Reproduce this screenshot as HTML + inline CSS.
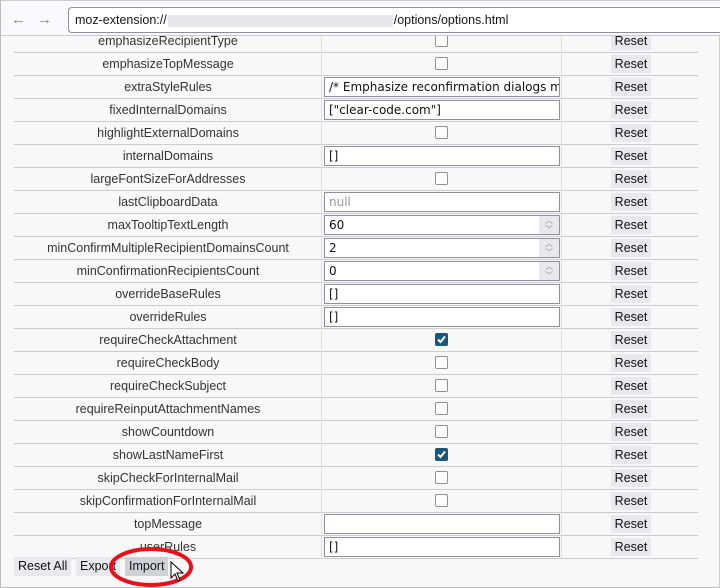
<!DOCTYPE html>
<html><head><style>
*{box-sizing:border-box;margin:0;padding:0}
body{width:720px;height:588px;overflow:hidden;background:#f8f8f8;font-family:"Liberation Sans",sans-serif;font-size:12px;color:#333;position:relative;border-left:1px solid #bbb;border-right:1px solid #ccc;border-bottom:1px solid #bbb}
.bar{position:absolute;left:0;top:0;width:720px;height:36px;background:#f9f9fb;border-top:1px solid #ccc;border-bottom:1px solid #ccc;z-index:5}
.url{position:absolute;left:67px;top:6px;width:653px;height:26px;border:1px solid #8f8f9d;border-right:none;border-radius:4px 0 0 4px;background:#fff;font-size:12.5px;line-height:24px;padding-left:6px;color:#15141a}
.blur{display:inline-block;width:225px;height:12px;background:#e8e8ea;vertical-align:middle;margin:0 1px}
.nav{position:absolute;top:10px;color:#888;font-size:15px}
.row{position:absolute;left:13px;width:684px;height:23px;border-bottom:1px solid #ccc}
.lab{position:absolute;left:0;width:308px;text-align:center;line-height:22px;font-size:12.5px}
.c2{position:absolute;left:307px;width:241px;height:23px;border-left:1px solid #e0e0e0;border-right:1px solid #e0e0e0}
.inp{position:absolute;left:2px;top:1px;width:236px;height:20px;border:1px solid #8f8f9d;background:#fff;line-height:18px;padding-left:4px;white-space:nowrap;overflow:hidden;color:#111;font-family:"DejaVu Sans",sans-serif;font-size:12px}
.sp{position:absolute;right:0;top:0;width:20px;height:18px;background:#e9e9ed;color:#888;font-size:8px;line-height:9px;text-align:center}
.cb{position:absolute;left:113px;top:4px;width:13px;height:13px;border:1px solid #8f8f9d;border-radius:2px;background:#fff}
.cb.on{background:#1a5677;border-color:#1a5677}
.rs{position:absolute;left:597px;top:2px;width:40px;height:18px;background:#e9e9ed;text-align:center;line-height:18px;font-size:12.5px;color:#111}
.b{position:absolute;top:557px;height:19px;background:#e9e9ed;line-height:19px;font-size:12.5px;color:#111;padding:0 4px}
</style></head><body>
<div class="bar"><span class="nav" style="left:10px">←</span><span class="nav" style="left:36px">→</span>
<div class="url">moz-extension://<span class="blur"></span>/options/options.html</div></div>
<div id="t"></div>
<div class="b" style="left:13px">Reset All</div>
<div class="b" style="left:75px">Export</div>
<div class="b" style="left:124px;background:#d0d0d7">Import</div>
<svg style="position:absolute;left:0;top:0" width="720" height="588"><ellipse cx="150" cy="567" rx="40" ry="18" fill="none" stroke="#e8101a" stroke-width="4"/>
<path d="M170 562 L170 578 L174 574 L177 581 L179 580 L176 573 L182 573 Z" fill="#fff" stroke="#000" stroke-width="1"/></svg>
<script>
var R=[["emphasizeRecipientType","c"],["emphasizeTopMessage","c"],["extraStyleRules","t","/* Emphasize reconfirmation dialogs more"],["fixedInternalDomains","t",'["clear-code.com"]'],["highlightExternalDomains","c"],["internalDomains","t","[]"],["largeFontSizeForAddresses","c"],["lastClipboardData","t","<span style=color:#999>null</span>"],["maxTooltipTextLength","n","60"],["minConfirmMultipleRecipientDomainsCount","n","2"],["minConfirmationRecipientsCount","n","0"],["overrideBaseRules","t","[]"],["overrideRules","t","[]"],["requireCheckAttachment","x"],["requireCheckBody","c"],["requireCheckSubject","c"],["requireReinputAttachmentNames","c"],["showCountdown","c"],["showLastNameFirst","x"],["skipCheckForInternalMail","c"],["skipConfirmationForInternalMail","c"],["topMessage","t",""],["userRules","t","[]"]];
var h="";R.forEach(function(r,i){var y=30+23*i;var c="";
if(r[1]=="c")c='<div class="cb"></div>';else if(r[1]=="x")c='<div class="cb on"><svg width="11" height="11" viewBox="0 0 11 11"><path d="M2 5.5L4.5 8L9 2.5" stroke="#fff" stroke-width="2" fill="none"/></svg></div>';
else c='<div class="inp">'+r[2]+(r[1]=="n"?'<div class="sp">︿<br>﹀</div>':'')+'</div>';
h+='<div class="row" style="top:'+y+'px"><div class="lab">'+r[0]+'</div><div class="c2">'+c+'</div><div class="rs">Reset</div></div>';});
document.getElementById("t").innerHTML=h;
</script>
</body></html>
